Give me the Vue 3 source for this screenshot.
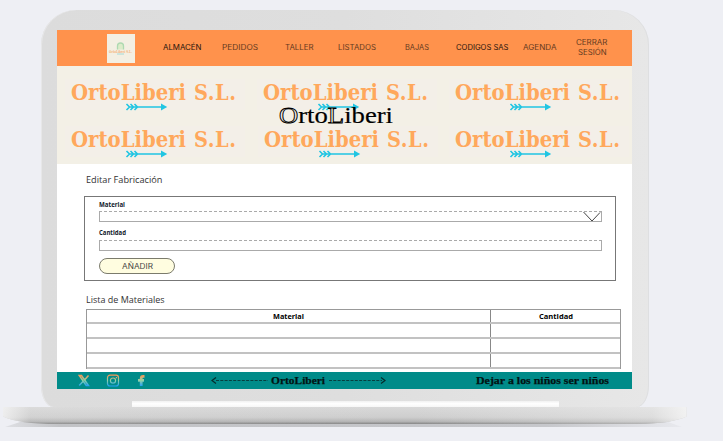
<script setup>
import { h } from 'vue'

// Single line of real text set to an exact width on a given baseline.
const FitText = (p) =>
  h('svg', { class: 'fit', width: p.w, height: p.h, 'aria-label': p.text }, [
    h('text', { x: 0, y: p.base, textLength: p.w, lengthAdjust: 'spacingAndGlyphs' }, p.text)
  ])
FitText.props = ['text', 'w', 'h', 'base']

const nav = [
  { lines: [['ALMACÉN', 38.5]], gap: 27.5, tone: 'dark' },
  { lines: [['PEDIDOS', 36]], gap: 21 },
  { lines: [['TALLER', 28.5]], gap: 27 },
  { lines: [['LISTADOS', 38]], gap: 24.5 },
  { lines: [['BAJAS', 24]], gap: 29 },
  { lines: [['CODIGOS SAS', 52.5]], gap: 27, tone: 'dark' },
  { lines: [['AGENDA', 33.5]], gap: 14.5 },
  { lines: [['CERRAR', 31.5], ['SESIÓN', 28.5]], gap: 19.5 }
]
</script>

<template>
  <main class="page">
    <div class="lid">
      <div class="screen">
        <nav class="nav">
          <svg class="logo" width="28" height="29" viewBox="0 0 28 29">
            <rect width="28" height="29" fill="#f3efe3" />
            <path d="M10.5 15.500V12a3 3 0 0 1 6 0v3.500" fill="#dcecc9" stroke="#aed9b1" stroke-width="1.300" />
            <text x="2" y="18.800" textLength="23" lengthAdjust="spacingAndGlyphs">OrtoLiberi S.L.</text>
            <path d="M10 20h7" stroke="#8fd5d5" stroke-width=".8" />
          </svg>
          <a
            v-for="item in nav"
            :key="item.lines[0][0]"
            :class="['link', item.tone]"
            :style="{ marginLeft: item.gap + 'px' }"
          >
            <FitText v-for="l in item.lines" :key="l[0]" class="navtext" :text="l[0]" :w="l[1]" :h="10" :base="7.2" />
          </a>
        </nav>

        <header class="banner">
          <svg v-for="n in 6" :key="n" :class="['tile', { shifted: n === 5 }]" width="192" height="47" viewBox="0 0 192 47">
            <rect class="patch" x="0" y="2" width="180" height="31" />
            <text class="brand">
              <tspan x="6" y="23" textLength="115" lengthAdjust="spacingAndGlyphs">OrtoLiberi</tspan>
              <tspan x="129" y="23" textLength="42" lengthAdjust="spacing">S.L.</tspan>
            </text>
            <g class="arrow">
              <path d="M61.500 27l3 3-3 3M65.500 27l3 3-3 3M69.500 27l3 3-3 3M63.500 30h36" />
              <path class="tip" d="M96 26.600l6.200 3.400-6.200 3.400z" />
            </g>
          </svg>
          <svg class="title" width="115" height="24" viewBox="0 0 115 24">
            <text x="0" y="19.500" textLength="114" lengthAdjust="spacingAndGlyphs"><tspan class="hollow">O</tspan>rto<tspan class="hollow">L</tspan>iberi</text>
          </svg>
        </header>

        <section class="content">
          <FitText class="heading" text="Editar Fabricación" :w="76.5" :h="14" :base="10" />
          <form class="form" @submit.prevent>
            <FitText class="label" text="Material" :w="26" :h="9" :base="6.500" />
            <div class="field">
              <svg width="18" height="10" viewBox="0 0 18 10"><path d="M.5 0 9 9 17 .5" /></svg>
            </div>
            <FitText class="label second" text="Cantidad" :w="27" :h="9" :base="7" />
            <div class="field"></div>
            <button class="add" type="button">
              <FitText text="AÑADIR" :w="31" :h="9" :base="7.3" />
            </button>
          </form>
          <FitText class="heading lower" text="Lista de Materiales" :w="78.5" :h="14" :base="10" />
          <div class="table">
            <div class="row head">
              <span><FitText text="Material" :w="31" :h="9" :base="7.3" /></span>
              <span><FitText text="Cantidad" :w="34" :h="9" :base="7.3" /></span>
            </div>
            <div v-for="n in 3" :key="n" class="row"><span></span><span></span></div>
          </div>
        </section>

        <footer class="footer">
          <svg class="social" width="70" height="13" viewBox="0 0 70 13">
            <defs>
              <linearGradient id="warm" gradientUnits="userSpaceOnUse" x1="0" y1="1" x2="0" y2="12">
                <stop offset="0" stop-color="#ff9450" />
                <stop offset=".5" stop-color="#8ed1a8" />
                <stop offset="1" stop-color="#229ff5" />
              </linearGradient>
            </defs>
            <g fill="none" stroke="url(#warm)">
              <path d="M1.300 1.500h2.200l7 10H8.200zM10.500 1.500 6.900 5.600M5 7.500 1.200 11.500" stroke-width="1.500" />
              <rect x="29.500" y="1.200" width="11" height="10.800" rx="2.500" stroke-width="1.200" />
              <circle cx="35" cy="6.600" r="2.600" stroke-width="1.200" />
              <path d="M37.800 3.600h1.200" stroke-width="1.200" />
              <path d="M66.500 2.300h-1.300q-2 0-2 2v7.700M60 6.300h6" stroke-width="2.800" />
            </g>
          </svg>
          <div class="center">
            <svg width="58" height="9" viewBox="0 0 58 9"><path d="M5 1.500 1 4.500l4 3" /><path class="dash" d="M5 4.500h52" /></svg>
            <FitText class="mark" text="OrtoLiberi" :w="54" :h="12" :base="9.3" />
            <svg width="59" height="9" viewBox="0 0 59 9"><path d="M54 1.500l4 3-4 3" /><path class="dash" d="M2 4.500h53" /></svg>
          </div>
          <FitText class="mark motto" text="Dejar a los niños ser niños" :w="133" :h="12" :base="9.3" />
        </footer>
      </div>
      <div class="notch"></div>
    </div>
    <svg class="base" width="723" height="34" viewBox="0 0 723 34">
      <defs>
        <linearGradient id="metal" x1="0" y1="0" x2="0" y2="1">
          <stop offset="0" stop-color="#d8d8d8" />
          <stop offset=".6" stop-color="#cecece" />
          <stop offset=".85" stop-color="#b5b5b5" />
          <stop offset="1" stop-color="#858585" />
        </linearGradient>
        <linearGradient id="shine">
          <stop offset="0" stop-color="#f5f5f5" stop-opacity=".8" />
          <stop offset=".04" stop-color="#f5f5f5" stop-opacity=".1" />
          <stop offset=".6" stop-color="#f5f5f5" stop-opacity="0" />
          <stop offset=".95" stop-color="#f5f5f5" stop-opacity=".4" />
          <stop offset="1" stop-color="#f5f5f5" stop-opacity=".9" />
        </linearGradient>
        <linearGradient id="cast">
          <stop offset="0" stop-color="#dfe0e4" />
          <stop offset=".08" stop-color="#c2c3c6" />
          <stop offset=".8" stop-color="#c6c7cb" />
          <stop offset="1" stop-color="#e8e9ee" />
        </linearGradient>
      </defs>
      <path d="M5 20L20 15H668L682 20z" fill="url(#cast)" />
      <path d="M3 0H686.500V9.500Q672 16.500 638 17H58Q18 17 3 9.500z" fill="url(#metal)" />
      <path d="M3 0H686.500V9.500Q672 16.500 638 17H58Q18 17 3 9.500z" fill="url(#shine)" />
    </svg>
  </main>
</template>

<style>
body { background: #eeeff4; }
</style>

<style scoped>
* { box-sizing: border-box; }
.page {
  width: 723px; height: 441px; overflow: hidden; padding-top: 10px;
  background: #eeeff4;
  font-family: "Open Sans", "Noto Sans", sans-serif;
}
svg { display: block; flex: none; }
.fit { overflow: visible; }
.lid {
  width: 608px; height: 397px; margin-left: 41px; padding: 20px 17px 0 16px;
  border-radius: 35px 35px 12px 12px / 35px 35px 22px 22px;
  background: linear-gradient(90deg, #dcdcdc, #dedede 50%, #e7e7e7);
  box-shadow: inset 1px 0 #e7e7e8, inset -1px 0 #dedfe1;
}
.screen { width: 575px; height: 359px; background: #fff; }
.nav { height: 36px; display: flex; align-items: center; padding-left: 50px; background: #ff924c; }
.logo { overflow: visible; }
.logo text { font: 700 4px "DejaVu Serif", serif; fill: #f3b47b; }
.link { display: flex; flex-direction: column; align-items: center; color: #653a20; }
.link.dark { color: #26150c; }
.navtext { font: 400 6.9px Inter, sans-serif; fill: currentColor; }
.banner {
  position: relative; height: 98px; padding: 11px 0 0 8px; overflow: hidden;
  display: grid; grid-template-columns: repeat(3, 192px); grid-auto-rows: 47px;
  background: #f3f0e6;
}
.patch { fill: #f3efe8; }
.brand { font: 700 21.5px "DejaVu Serif Condensed", "DejaVu Serif", serif; fill: #ffa85c; }
.arrow { fill: none; stroke: #20c5e2; stroke-width: 1.6px; }
.arrow .tip { fill: #20c5e2; stroke: none; }
.shifted { transform: translateX(1px); }
.title { position: absolute; left: 221.5px; top: 37px; overflow: visible; font: 400 24px "Liberation Serif", serif; fill: #000; }
.title text { stroke: #000; stroke-width: .2px; }
.title .hollow { fill: #f3f0e6; stroke: #000; stroke-width: .9px; }
.content { height: 208px; padding: 9px 0 0 27px; }
.heading { margin-left: 2px; font-size: 9px; fill: #333; }
.form { width: 532px; height: 85px; margin-top: 9px; padding: 3px 13px 0 14px; border: 1px solid #777; }
.label { font-size: 6.2px; font-weight: 700; fill: #10202a; }
.label.second { margin-top: 6px; }
.field { height: 11px; width: 503px; margin-top: 2px; border: 1px solid #aaa; border-top-style: dashed; display: flex; justify-content: flex-end; }
.field + .label + .field { margin-top: 3px; }
.field path { fill: none; stroke: #444; stroke-width: 1px; }
.add {
  display: flex; align-items: center; justify-content: center; width: 76px; height: 16px; margin-top: 7px; padding: 0;
  border: 1px solid #7b7b6c; border-radius: 8px; background: #fffde0;
  font: 400 7px Inter, sans-serif; fill: #444;
}
.heading.lower { margin-top: 12px; }
.table { width: 535px; margin: 2px 0 0 2px; border: 1px solid #999; border-bottom: 0; }
.row { display: grid; grid-template-columns: 403px 1fr; height: 15px; border-bottom: 2px solid #c2c2c2; }
.row.head { height: 14px; }
.row span { display: flex; justify-content: center; align-items: center; font-size: 7px; font-weight: 700; fill: #000; }
.row span + span { border-left: 1px solid #888; }
.footer { height: 17px; display: flex; align-items: center; padding-left: 21px; background: #008b89; }
.center { display: flex; align-items: center; gap: 2px; margin-left: 63px; }
.center path { fill: none; stroke: #062c2c; stroke-width: 1.2px; }
.center .dash { stroke-width: .8px; stroke-dasharray: 3 1.300; }
.mark { font: 700 10.5px "Liberation Serif", serif; fill: #021414; stroke: #021414; stroke-width: .25px; }
.motto { margin-left: 89.5px; }
.notch { width: 427px; height: 6px; margin: 12px 0 0 75px; background: linear-gradient(#f1f1f1, #fff 45%, #f6f6f6); }
</style>
